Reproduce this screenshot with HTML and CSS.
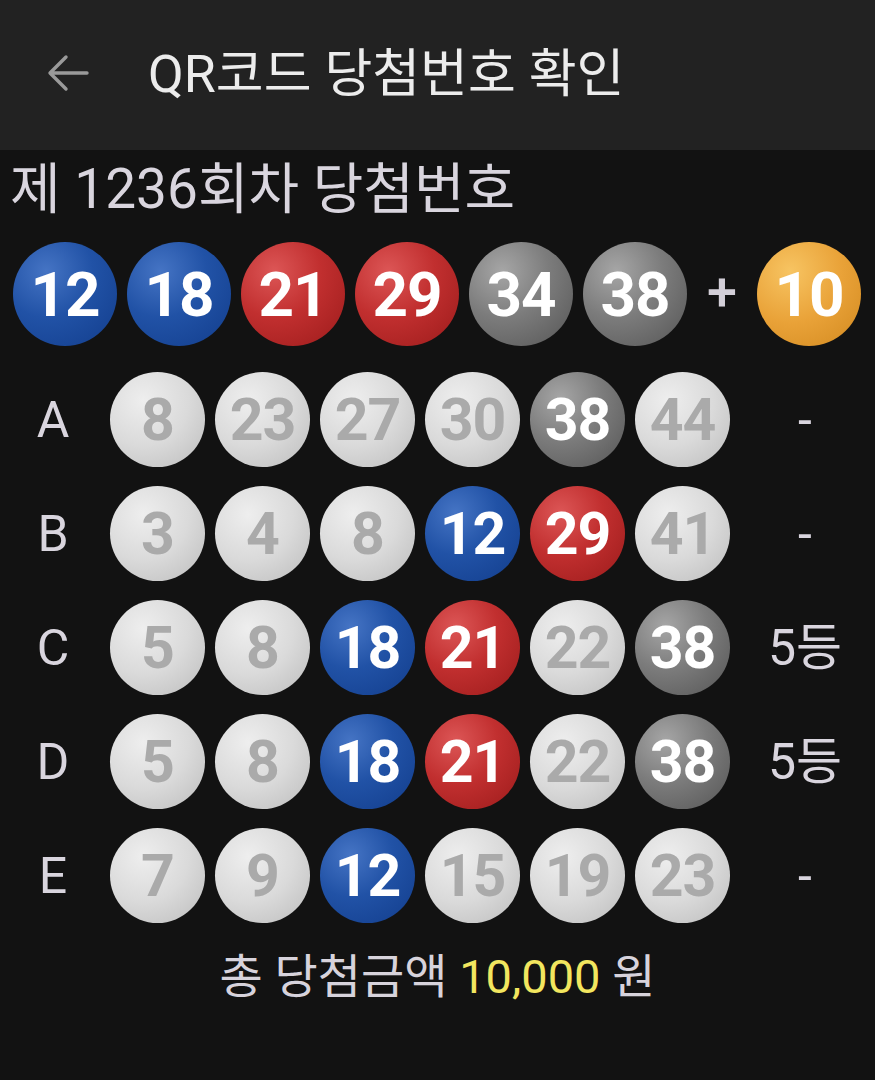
FILE: index.html
```html
<!DOCTYPE html>
<html lang="ko">
<head>
<meta charset="utf-8">
<title>QR코드 당첨번호 확인</title>
<link rel="stylesheet" href="styles.css">
</head>
<body>
<header class="appbar">
  <svg class="back" width="44" height="44" viewBox="0 0 44 44" aria-hidden="true">
    <path d="M41 22 H5 M20 6 L4 22 L20 38" fill="none" stroke="#9a9a9a" stroke-width="3.4" stroke-linecap="round" stroke-linejoin="round"/>
  </svg>
  <h1 class="title">QR코드 당첨번호 확인</h1>
</header>
<main class="content">
  <h2 class="round">제 1236회차 당첨번호</h2>
  <div class="win">
    <span class="ball big blue">12</span>
    <span class="ball big blue">18</span>
    <span class="ball big red">21</span>
    <span class="ball big red">29</span>
    <span class="ball big dark">34</span>
    <span class="ball big dark">38</span>
    <span class="plus">+</span>
    <span class="ball big gold">10</span>
  </div>
  <div class="games">
    <span class="label">A</span>
    <span class="ball off">8</span><span class="ball off">23</span><span class="ball off">27</span><span class="ball off">30</span><span class="ball dark">38</span><span class="ball off">44</span>
    <span class="result">-</span>

    <span class="label">B</span>
    <span class="ball off">3</span><span class="ball off">4</span><span class="ball off">8</span><span class="ball blue">12</span><span class="ball red">29</span><span class="ball off">41</span>
    <span class="result">-</span>

    <span class="label">C</span>
    <span class="ball off">5</span><span class="ball off">8</span><span class="ball blue">18</span><span class="ball red">21</span><span class="ball off">22</span><span class="ball dark">38</span>
    <span class="result">5등</span>

    <span class="label">D</span>
    <span class="ball off">5</span><span class="ball off">8</span><span class="ball blue">18</span><span class="ball red">21</span><span class="ball off">22</span><span class="ball dark">38</span>
    <span class="result">5등</span>

    <span class="label">E</span>
    <span class="ball off">7</span><span class="ball off">9</span><span class="ball blue">12</span><span class="ball off">15</span><span class="ball off">19</span><span class="ball off">23</span>
    <span class="result">-</span>
  </div>
  <p class="total">총 당첨금액 <span class="amount">10,000</span> 원</p>
</main>
</body>
</html>
```

FILE: styles.css
```css
* { box-sizing: border-box; }

html, body {
  margin: 0;
  padding: 0;
  background: #121212;
  font-family: Roboto, "Noto Sans CJK KR", sans-serif;
  width: 875px;
  height: 1080px;
  overflow: hidden;
}

.appbar {
  height: 150px;
  background: #222222;
  display: flex;
  align-items: center;
  padding-left: 46px;
}

.back {
  display: block;
  margin-top: -4px;
}

.title {
  margin: 0 0 0 58px;
  font-size: 52px;
  font-weight: 400;
  color: #ececec;
  line-height: 1;
  margin-top: 0;
}

.content {
  padding-top: 8px;
}

.round {
  margin: 0;
  padding-left: 10px;
  font-size: 55px;
  font-weight: 400;
  line-height: 62px;
  color: #d9d5de;
}

.win {
  display: flex;
  align-items: center;
  gap: 10px;
  padding-left: 13px;
  margin-top: 22px;
}

.ball {
  display: flex;
  align-items: center;
  justify-content: center;
  width: 95px;
  height: 95px;
  border-radius: 50%;
  font-weight: 700;
  font-size: 59px;
  color: #ffffff;
  letter-spacing: -1px;
  flex: none;
}

.ball.big {
  width: 104px;
  height: 104px;
  font-size: 62px;
}

.blue {
  background: radial-gradient(circle at 32% 28%, #4574c4 0%, #2152a6 45%, #123d8c 100%);
}

.red {
  background: radial-gradient(circle at 32% 28%, #dc5656 0%, #c12f2f 45%, #9c1b1b 100%);
}

.dark {
  background: radial-gradient(circle at 32% 28%, #a6a6a6 0%, #7c7c7c 45%, #555555 100%);
}

.gold {
  background: radial-gradient(circle at 32% 28%, #f7c462 0%, #e9a238 50%, #d2891f 100%);
}

.off {
  background: radial-gradient(circle at 35% 30%, #eeeeee 0%, #dadada 50%, #bcbcbc 100%);
  color: #aaaaaa;
}

.plus {
  width: 50px;
  text-align: center;
  font-size: 54px;
  font-weight: 500;
  color: #d3cfd8;
  line-height: 1;
  margin-top: -4px;
}

.games {
  display: grid;
  grid-template-columns: 100px repeat(6, 95px) 130px;
  column-gap: 10px;
  row-gap: 19px;
  align-items: center;
  margin-top: 26px;
}

.label {
  text-align: center;
  padding-left: 6px;
  font-size: 50px;
  color: #d9d5de;
  line-height: 1;
}

.result {
  text-align: center;
  font-size: 50px;
  color: #d9d5de;
  line-height: 1;
}

.total {
  margin: 23px 0 0;
  text-align: center;
  font-size: 47px;
  line-height: 62px;
  color: #d7d3dc;
}

.amount {
  color: #f2e65f;
}
```
